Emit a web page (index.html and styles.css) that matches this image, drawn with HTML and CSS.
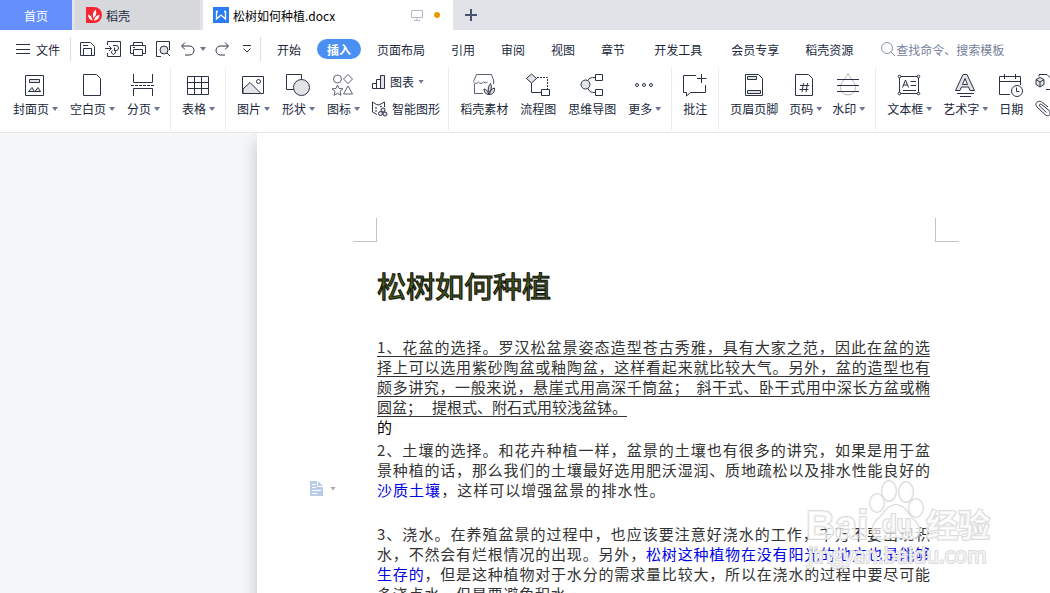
FILE: index.html
```html
<!DOCTYPE html>
<html lang="zh-CN">
<head>
  <meta charset="UTF-8">
  <meta name="viewport" content="width=device-width, initial-scale=1.0">
  <title>松树如何种植.docx</title>
  <link rel="stylesheet" href="styles.css">
</head>

<body>
  <header class="tabs">
    <button class="tab tab-home">首页</button>
    <button class="tab tab-docer">
      <svg width="16" height="16" viewBox="0 0 16 16"><path fill="#f8242f" d="M0 0h8a8 8 0 0 1 0 16H0z"/><path fill="#fff" d="M7 13.500C4 13 2 11 2 7.500c2 .5 3.500 2 4 4zM7.500 11C6 8 7 5 9.500 2.500 11 5.500 10.500 8.500 7.500 11zM8 13.500c.5-3 2.500-5 5.500-6 0 3.500-2 6-5.500 6z"/></svg>
      <span>稻壳</span>
    </button>
    <button class="tab tab-doc">
      <svg width="16" height="16" viewBox="0 0 16 16"><path fill="#2b7cf3" d="M0 0h16v16H0z"/><path fill="none" stroke="#fff" stroke-width="1.300" d="M3.500 4v8L8 8l4.500 4V4M3 4.500h2M11 4.500h2"/></svg>
      <span class="tab-name">松树如何种植.docx</span>
      <svg class="monitor" width="12" height="12" viewBox="0 0 12 12"><path d="M.5 1.500h11v7H.5zM6 8.500v3M3 11.500h6"/></svg>
      <i class="dot"></i>
    </button>
    <button class="tab tab-add" aria-label="新建"><svg width="12" height="12" viewBox="0 0 12 12"><path d="M6 0v12M0 6h12"/></svg></button>
  </header>

  <nav class="menu">
    <button class="file"><svg class="icon" width="14" height="14" viewBox="0 0 14 14"><path d="M0 2.500h14M0 7.500h14M0 11.500h14"/></svg>文件</button>
    <div class="quick">
      <button aria-label="保存"><svg class="icon" width="16" height="16" viewBox="0 0 16 16"><path d="M.5 1.500h10l4 4v9H.5zM3.500 14V7.500h8V14M3 4.500h5"/></svg></button>
      <button aria-label="输出为PDF"><svg class="icon" width="16" height="16" viewBox="0 0 16 16"><path d="M2.500 4V.5h13v15h-13V12M0 7.500h6M4 5l2.500 2.500L4 10M8 4.500h3a2.500 2.500 0 0 1 0 5H9.500V6.500M9.500 9.500a2 2 0 1 1-2 0"/></svg></button>
      <button aria-label="打印"><svg class="icon" width="16" height="16" viewBox="0 0 16 16"><path d="M3.500 4V1.500h9V4M3.500 12.500h-3v-8h15v8h-3M3.500 8.500h9v6h-9zM3 6.500h2"/></svg></button>
      <button aria-label="打印预览"><svg class="icon" width="16" height="16" viewBox="0 0 16 16"><path d="M6 15.500H1.500V.5h13V9"/><circle class="shade" cx="9" cy="9" r="4"/><path d="M12 12l3 3"/></svg></button>
      <button aria-label="撤销"><svg class="icon" width="16" height="16" viewBox="0 0 16 16"><path d="M5 1.500L1.500 5 5 8.500M2 5h7.500a4.500 4.500 0 0 1 0 9H5"/></svg><i class="caret"></i></button>
      <button class="redo" aria-label="恢复"><svg class="icon" width="16" height="16" viewBox="0 0 16 16"><path d="M11 1.500L14.500 5 11 8.500M14 5H6.500a4.500 4.500 0 0 0 0 9H11"/></svg></button>
      <button class="more" aria-label="自定义"><svg class="icon" width="8" height="8" viewBox="0 0 8 8"><path d="M0 .5h8M.5 3.500L4 7l3.500-3.500"/></svg></button>
    </div>
    <div class="menu-items">
      <button>开始</button>
      <button class="active">插入</button>
      <button>页面布局</button>
      <button>引用</button>
      <button>审阅</button>
      <button>视图</button>
      <button>章节</button>
      <button class="spaced">开发工具</button>
      <button class="spaced">会员专享</button>
      <button>稻壳资源</button>
    </div>
    <label class="search">
      <svg width="16" height="16" viewBox="0 0 16 16"><circle cx="7" cy="7" r="5.500"/><path d="M11 11l4 4"/></svg>
      <input type="text" aria-label="搜索" placeholder="查找命令、搜索模板">
    </label>
  </nav>

  <section class="ribbon">
    <div class="group first">
      <button class="tool"><svg class="icon" width="24" height="24" viewBox="0 0 24 24"><path d="M2.500 2.500h18v20h-18z"/><path class="shade" d="M6.500 6.500h10v3h-10zM5.500 18.500l3.500-4 2.500 4zM12 18.500l3-4 2.500 4z"/></svg><span>封面页<i class="caret"></i></span></button>
      <button class="tool"><svg class="icon" width="24" height="24" viewBox="0 0 24 24"><path d="M3.500 1.500h13l4 4v17h-17z"/></svg><span>空白页<i class="caret"></i></span></button>
      <button class="tool"><svg class="icon" width="24" height="24" viewBox="0 0 24 24"><path d="M2.500 1v8.500h19V1M2.500 23v-7.500h19V23"/><path stroke-dasharray="3 1" d="M0 12.500h24"/></svg><span>分页<i class="caret"></i></span></button>
    </div>
    <div class="group">
      <button class="tool"><svg class="icon" width="24" height="24" viewBox="0 0 24 24"><path d="M1.500 3.500h21v18h-21zM1.500 9.500h21M1.500 15.500h21M8.500 3.500v18M15.500 3.500v18"/></svg><span>表格<i class="caret"></i></span></button>
    </div>
    <div class="group tight">
      <button class="tool"><svg class="icon" width="24" height="24" viewBox="0 0 24 24"><path class="shade" d="M2 16l7-6.500 11 11H2z"/><path d="M1.500 3.500h21v17h-21z"/><circle cx="17.500" cy="8.500" r="2"/></svg><span>图片<i class="caret"></i></span></button>
      <button class="tool"><svg class="icon" width="24" height="24" viewBox="0 0 24 24"><path d="M.5 1.500h15v15H.5z"/><circle class="shade" cx="15.500" cy="14.500" r="8"/></svg><span>形状<i class="caret"></i></span></button>
      <button class="tool"><svg class="icon soft" width="24" height="24" viewBox="0 0 24 24"><circle cx="6.500" cy="6" r="4"/><path d="M17 1.500L21.500 6 17 10.500 12.500 6zM17 13l4.500 8h-9zM6.500 12l1.500 3.500 4 .3-3 2.500 1 4-3.500-2-3.500 2 1-4-3-2.500 4-.3z"/></svg><span>图标<i class="caret"></i></span></button>
      <div class="stack">
        <button><svg class="icon" width="14" height="16" viewBox="0 0 14 16"><path d="M.5 9.500h4v5h-4zM4.500 5.500h4v9h-4z"/><path class="shade" d="M8.500 1.500h4v13h-4z"/></svg>图表<i class="caret"></i></button>
        <button><svg class="icon" width="16" height="16" viewBox="0 0 16 16"><path d="M5 13.500L.5 11V1l4 2.500L7 4l5.500-3v5M3 7h2M3 10h2M8 6l2-1"/><circle class="shade" cx="11" cy="9" r="2"/><circle class="shade" cx="8.500" cy="12.500" r="2"/><circle class="shade" cx="13" cy="13" r="2"/></svg>智能图形</button>
      </div>
    </div>
    <div class="group medium">
      <button class="tool"><svg class="icon soft" width="24" height="24" viewBox="0 0 24 24"><path d="M1.500 8.500l3-7h15l2.500 7M1.500 9a3 3 0 0 0 5 0 3 3 0 0 0 5 0 3 3 0 0 0 4 0M21.500 8v3M2.500 11v9.500H11"/><path class="dark" d="M17 21.500c-3 0-5-2-5-5.500 2 .3 3.500 1.500 4 3.500zM17 19.500c-1.500-3-.5-6.500 1.500-9 1.500 3 1 6.500-1.500 9zM17.500 21.500c.3-3.500 2-6 5-6.500.3 4-1.500 6.500-5 6.500z"/></svg><span>稻壳素材</span></button>
      <button class="tool"><svg class="icon" width="24" height="24" viewBox="0 0 24 24"><path class="shade" d="M5.500 1l5 4.500-5 4.500-5-4.500z"/><path d="M5.500 10v9.500h10M15.500 16.500h8v6h-8z"/><path stroke-dasharray="2 1" d="M11 4.500h10.500V16"/></svg><span>流程图</span></button>
      <button class="tool"><svg class="icon" width="24" height="24" viewBox="0 0 24 24"><circle class="shade" cx="5.500" cy="11.500" r="4.500"/><path d="M8 7.500c1-2.500 3-3 7-3M8 15.500c1 3 3 4 7 4M15.500 1.500h7v6h-7zM15.500 16.500h7v6h-7z"/></svg><span>思维导图</span></button>
      <button class="tool"><svg class="icon" width="24" height="24" viewBox="0 0 24 24"><circle cx="5" cy="12" r="1.500"/><circle cx="12" cy="12" r="1.500"/><circle cx="19" cy="12" r="1.500"/></svg><span>更多<i class="caret"></i></span></button>
    </div>
    <div class="group">
      <button class="tool"><svg class="icon" width="24" height="24" viewBox="0 0 24 24"><path d="M13 2.500H.5v17h3V23l4-3.500h15V12M18.500 1v9M14 5.500h9.500"/></svg><span>批注</span></button>
    </div>
    <div class="group narrow">
      <button class="tool"><svg class="icon" width="24" height="24" viewBox="0 0 24 24"><path d="M3.500 1.500h13l4 4v17h-17z"/><path class="shade" d="M5.500 3.500h9v3h-9zM5.500 17.500h13v3h-13z"/></svg><span>页眉页脚</span></button>
      <button class="tool"><svg class="icon" width="24" height="24" viewBox="0 0 24 24"><path d="M2.500 1.500h13l4 4v17h-17zM7 12.500h9M6.500 16.500h9M10.500 10l-1.500 9M14.500 10L13 19"/></svg><span>页码<i class="caret"></i></span></button>
      <button class="tool"><svg class="icon" width="24" height="24" viewBox="0 0 24 24"><path class="pale" d="M12 .5c3 6 7.500 9 7.500 14a7.500 7.500 0 0 1-15 0c0-5 4.500-8 7.500-14z"/><path d="M1 6.500h22M1 12.500h22M1 18.500h22"/></svg><span>水印<i class="caret"></i></span></button>
    </div>
    <div class="group medium last">
      <button class="tool"><svg class="icon" width="24" height="24" viewBox="0 0 24 24"><path d="M2.500 3.500h19v17h-19zM5.500 14.500l3-7.500 3 7.500M6.500 12h4M13.500 8.500H19M13.500 12.500H19M6 17.500h13"/><g fill="#fff"><circle cx="2.500" cy="3.500" r="1.300"/><circle cx="21.500" cy="3.500" r="1.300"/><circle cx="2.500" cy="20.500" r="1.300"/><circle cx="21.500" cy="20.500" r="1.300"/></g></svg><span>文本框<i class="caret"></i></span></button>
      <button class="tool"><svg class="icon" width="24" height="24" viewBox="0 0 24 24"><path class="shade" fill-rule="evenodd" d="M10 1.500h4l7.500 16h-4.500l-1.500-3.500h-7L7 17.500H2.500zM12 5.500l-2.500 6h5z"/><path d="M4 20.500h17M7 23.500h11"/></svg><span>艺术字<i class="caret"></i></span></button>
      <button class="tool"><svg class="icon" width="24" height="24" viewBox="0 0 24 24"><path d="M11 21.500H.5v-18h21V12M.5 8.500h21M5.500 1v5M16.500 1v5"/><circle cx="18" cy="18" r="5.500"/><path d="M17.500 14.500v4h3"/></svg><span>日期</span></button>
      <div class="stack">
        <button aria-label="对象"><svg class="icon" width="18" height="18" viewBox="0 0 18 18"><path d="M4 3.500v-2h8l4 4v11H11"/><path class="shade" d="M5 4.500l4 2v5l-4 2.500-4-2.500v-5z"/><path d="M1 6.500L5 9l4-2.500M5 9v5"/></svg></button>
        <button aria-label="附件"><svg class="icon" width="18" height="18" viewBox="0 0 18 18"><path d="M13 7L7.500 2.500C5 .5 2 1 1 3.500c-.5 1 0 2.500 1 3.500l8 7.500c1.500 1.500 3.500 1.500 4.500.5s1-3-.5-4.500L6.500 4.500C5.500 3.500 4 4.500 4.500 6l7 6.500"/></svg></button>
      </div>
    </div>
  </section>

  <main class="workspace">
    <article class="page">
      <div class="corners"><i class="corner left"></i><i class="corner right"></i></div>
      <h1>松树如何种植</h1>
      <p class="underlined">
        <span class="line">1、花盆的选择。罗汉松盆景姿态造型苍古秀雅，具有大家之范，因此在盆的选</span>
        <span class="line">择上可以选用紫砂陶盆或釉陶盆，这样看起来就比较大气。另外，盆的造型也有</span>
        <span class="line">颇多讲究，一般来说，悬崖式用高深千筒盆；&nbsp; 斜干式、卧干式用中深长方盆或椭</span>
        <span class="line end">圆盆；&nbsp;&nbsp; 提根式、附石式用较浅盆钵。</span>
      </p>
      <p class="loose">的</p>
      <p class="marked">
        <button class="section-button" aria-label="段落布局"><svg width="13" height="15" viewBox="0 0 13 15"><path fill="#b9cce8" d="M0 0h8l5 5v10H0z"/><path fill="none" stroke="#fff" d="M2 3.500h4M2 6.500h4M2 9.500h9M2 12.500h5M7.500 0v5.500H13"/></svg><i class="caret"></i></button>
        <span class="line">2、土壤的选择。和花卉种植一样，盆景的土壤也有很多的讲究，如果是用于盆</span>
        <span class="line">景种植的话，那么我们的土壤最好选用肥沃湿润、质地疏松以及排水性能良好的</span>
        <span class="line half"><a href="#soil">沙质土壤</a>，这样可以增强盆景的排水性。</span>
      </p>
      <p>
        <span class="line">3、浇水。在养殖盆景的过程中，也应该要注意好浇水的工作，千万不要出现积</span>
        <span class="line">水，不然会有烂根情况的出现。另外，<a href="#sun">松树这种植物在没有阳光的地方也是能够</a></span>
        <span class="line"><a href="#sun">生存的</a>，但是这种植物对于水分的需求量比较大，所以在浇水的过程中要尽可能</span>
        <span class="line third">多浇点水，但是要避免积水。</span>
      </p>
    </article>
    <svg class="watermark" width="200" height="100" viewBox="0 0 200 100">
      <ellipse cx="77" cy="28" rx="7" ry="9"/>
      <ellipse cx="89" cy="16" rx="7" ry="10"/>
      <ellipse cx="106" cy="17" rx="7" ry="10"/>
      <ellipse cx="116" cy="33" rx="7" ry="9"/>
      <path d="M96 30c9 0 11 8 17 14 9 8 9 20-3 20-6 0-8-2-14-2s-8 2-14 2c-12 0-12-12-4-20 7-6 9-14 18-14z"/>
      <text class="brand" x="6" y="64">Bai</text>
      <text class="du" x="82" y="57">du</text>
      <text class="cn" x="126" y="62">经验</text>
      <text class="url" x="8" y="88">jingyan.baidu.com</text>
    </svg>
  </main>
</body>
</html>
```

FILE: styles.css
```css
* {
  box-sizing: border-box;
}

body {
  display: flex;
  flex-direction: column;
  height: 100vh;
  margin: 0;
  overflow: hidden;
  font-family: "Noto Sans CJK SC", sans-serif;
  font-size: 12px;
  color: #20283c;
  background: #fff;
}

button {
  display: flex;
  align-items: center;
  flex-shrink: 0;
  padding: 0;
  border: none;
  background: none;
  font: inherit;
  color: inherit;
  white-space: nowrap;
  cursor: pointer;
}

svg {
  display: block;
  flex-shrink: 0;
}

.icon {
  fill: none;
  stroke: #2a3245;
}

.icon.soft {
  stroke: #5b6170;
}

.icon .shade {
  fill: #e1e3e6;
}

.icon .dark {
  fill: #d5d8dd;
  stroke: #2a3245;
}

.icon .pale {
  stroke: #b5b8c0;
}

.caret {
  width: 6px;
  height: 4px;
  margin-right: -1px;
  background: #6c7690;
  clip-path: polygon(0 0, 100% 0, 50% 100%);
}

/* Tabs */
.tabs {
  display: flex;
  flex-shrink: 0;
  height: 30px;
  background: #e1e3e8;
}

.tab-home {
  justify-content: center;
  width: 72px;
  margin-right: 3px;
  background: #648ffc;
  color: #fff;
}

.tab-docer {
  gap: 4px;
  width: 125px;
  margin-right: 3px;
  padding-left: 11px;
  background: #d7d8db;
}

.tab-doc {
  gap: 4px;
  width: 250px;
  padding: 0 13px 0 10px;
  background: #fff;
  color: #000;
}

.tab-name {
  flex: 1;
  text-align: left;
}

.monitor {
  fill: none;
  stroke: #b3b9c9;
  margin-right: 7px;
}

.dot {
  width: 6px;
  height: 6px;
  border-radius: 50%;
  background: #e69a00;
}

.tab-add {
  padding: 0 12px;
  stroke: #45536e;
  stroke-width: 2;
}

/* Menu row */
.menu {
  display: flex;
  align-items: center;
  flex-shrink: 0;
  height: 38px;
}

.file {
  gap: 6px;
  height: 24px;
  padding: 0 10px 0 16px;
  border-right: 1px solid #dcdee3;
}

.quick {
  display: flex;
  align-items: center;
  gap: 9px;
  height: 24px;
  padding: 0 9px 0 9px;
  border-right: 1px solid #dcdee3;
}

.quick button {
  gap: 4px;
}

.quick .more {
  padding-left: 4px;
}

.menu-items {
  display: flex;
  gap: 6px;
  padding-left: 6px;
}

.menu-items button {
  height: 20px;
  padding: 0 10px;
  border-radius: 10px;
}

.menu-items .active {
  background: #4a90f3;
  color: #fff;
  font-weight: bold;
}

.menu-items .spaced {
  margin-left: 3px;
}

.search {
  display: flex;
  flex: 1;
  align-items: center;
  min-width: 0;
  padding-left: 17px;
}

.search svg {
  fill: none;
  stroke: #8a94ab;
}

.search input {
  flex: 1;
  min-width: 0;
  padding: 0;
  border: none;
  outline: none;
  font: inherit;
}

.search input::placeholder {
  color: #76809c;
}

/* Ribbon */
.ribbon {
  display: flex;
  flex-shrink: 0;
  height: 65px;
  overflow: hidden;
  border-bottom: 1px solid #e6e7ea;
}

.group {
  display: flex;
  flex-shrink: 0;
  align-items: flex-start;
  gap: 13px;
  height: 62px;
  padding: 5px 11px 0;
  border-right: 1px solid #ebecef;
}

.group.first {
  padding-left: 13px;
}

.group.tight {
  padding-right: 8px;
}

.group.medium {
  gap: 12px;
}

.group.narrow {
  gap: 11px;
}

.group.last {
  border: none;
}

.tool {
  flex-direction: column;
  gap: 4px;
}

.tool span {
  display: flex;
  align-items: center;
  gap: 3px;
  line-height: 16px;
}

.stack {
  display: flex;
  flex-direction: column;
  gap: 10px;
}

.stack button {
  gap: 4px;
  height: 17px;
}

/* Document */
.workspace {
  display: flex;
  flex: 1;
  min-height: 0;
  position: relative;
  overflow: hidden;
  padding-left: 257px;
  background: #f6f7f9;
}

.page {
  flex: 1;
  height: max-content;
  padding: 85px 120px;
  background: #fff;
  box-shadow: 0 8px 16px #bfc0c3;
  font-size: 15px;
  line-height: 20px;
  color: #333;
}

.corners {
  display: flex;
  justify-content: space-between;
  margin: 0 -29px 0 -24px;
}

.corner {
  width: 24px;
  height: 24px;
  border-bottom: 1px solid #c3c3c3;
}

.corner.left {
  border-right: 1px solid #c3c3c3;
}

.corner.right {
  border-left: 1px solid #c3c3c3;
}

h1 {
  margin: 23px 0 32px;
  font-size: 29px;
  line-height: 40px;
  font-weight: 400;
  color: #4a6120;
  -webkit-text-stroke: 1px #0c0e08;
  text-shadow: 1px 1px 1px #bbb;
}

p {
  margin: 0 0 24px;
}

.underlined {
  margin: 0;
}

.loose {
  margin-bottom: 3px;
  color: #000;
}

.line {
  display: block;
  height: 20px;
  white-space: nowrap;
  text-align: justify;
  text-align-last: justify;
}

.line.end {
  width: fit-content;
}

.line.half {
  width: 52%;
}

.line.third {
  width: 37%;
}

.underlined .line {
  border-bottom: 1px solid #333;
}

.line a {
  color: #0000e6;
  text-decoration: none;
}

.marked {
  position: relative;
}

.section-button {
  position: absolute;
  top: 41px;
  left: -67px;
  gap: 7px;
}

.section-button .caret {
  background: #aaa;
}

.watermark {
  position: absolute;
  right: 50px;
  bottom: 18px;
  fill: #fff;
  fill-opacity: 0.7;
  stroke: #d6d6d6;
  stroke-width: 2;
  stroke-opacity: 0.9;
  paint-order: stroke;
  pointer-events: none;
}

.watermark text {
  font-family: "Liberation Sans", "Noto Sans CJK SC", sans-serif;
  font-weight: bold;
}

.watermark .brand {
  font-size: 40px;
}

.watermark .du {
  font-size: 24px;
}

.watermark .cn {
  font-size: 32px;
}

.watermark .url {
  font-family: "Open Sans", sans-serif;
  font-size: 21px;
  font-weight: normal;
}
```
